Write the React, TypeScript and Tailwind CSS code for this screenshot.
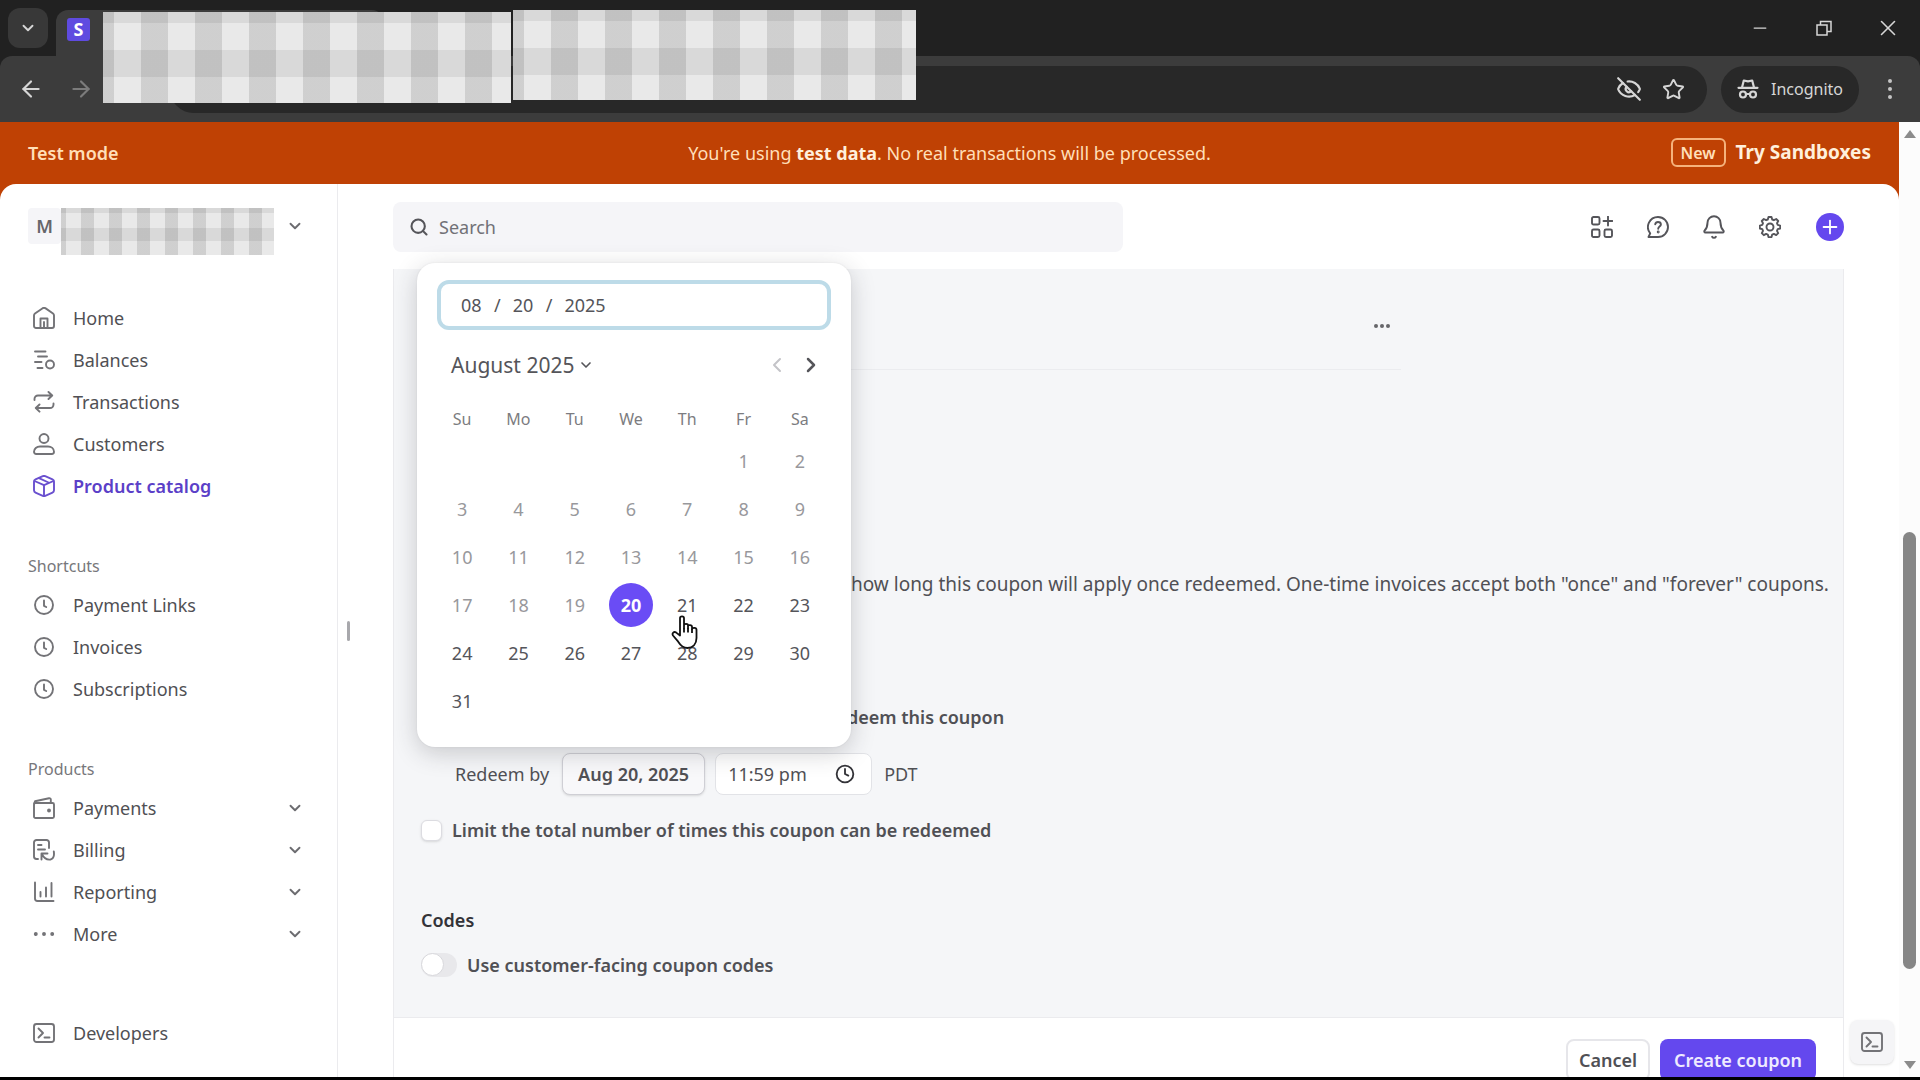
import React from 'react';
import { ChevronDown, ChevronLeft, ChevronRight, ArrowLeft, ArrowRight, Search, Bell, Minus, X, Plus, Star, EyeOff, Clock } from 'lucide-react';

interface IconProps {
    className?: string;
}

interface NavItem {
    label: string;
    icon: React.FC<IconProps>;
    active?: boolean;
    expandable?: boolean;
}

const Svg: React.FC<IconProps & { children: React.ReactNode }> = ({ className = 'w-[22px] h-[22px]', children }) => (
    <svg xmlns="http://www.w3.org/2000/svg" className={className} viewBox="0 0 22 22" fill="none" stroke="currentColor" strokeWidth="1.9" strokeLinecap="round" strokeLinejoin="round">
        {children}
    </svg>
);

const HomeIcon: React.FC<IconProps> = (props) => (
    <Svg {...props}>
        <path d="M1 8.6c0-.8.4-1.500 1-2L9.300 1.400c1-.7 2.400-.7 3.400 0L20 6.600c.6.500 1 1.200 1 2V19a2 2 0 0 1-2 2H3a2 2 0 0 1-2-2z" />
        <path d="M7.500 21v-9.500h7V21M11 15v6" />
    </Svg>
);

const BalancesIcon: React.FC<IconProps> = (props) => (
    <Svg {...props}>
        <path d="M2 2.500h10.500M5 7.500h9M2 13h6.500M4.500 19h5" />
        <circle cx="17" cy="15.500" r="4" />
    </Svg>
);

const TransactionsIcon: React.FC<IconProps> = (props) => (
    <Svg {...props}>
        <path d="M1.500 9V8a3.500 3.500 0 0 1 3.500-3.500h14M15.500 1l3.700 3.500L15.500 8" />
        <path d="M20.500 12.500v1A3.500 3.500 0 0 1 17 17H3M6.500 13.500 2.800 17l3.700 3.700" />
    </Svg>
);

const CustomersIcon: React.FC<IconProps> = (props) => (
    <Svg {...props}>
        <circle cx="11" cy="5.500" r="4.500" />
        <path d="M7 13.500h8c3.300 0 6 2.200 6 5.300 0 1.300-.9 2.200-2.200 2.200H3.200C1.900 21 1 20.100 1 18.800c0-3.100 2.700-5.300 6-5.300z" />
    </Svg>
);

const ProductIcon: React.FC<IconProps> = (props) => (
    <Svg {...props}>
        <path d="M9.800 1.200a3 3 0 0 1 2.400 0l7.300 3.200c.9.400 1.500 1.300 1.500 2.300v8.600c0 1-.6 1.900-1.500 2.300l-7.300 3.200a3 3 0 0 1-2.400 0l-7.300-3.200A2.500 2.500 0 0 1 1 15.300V6.700c0-1 .6-1.900 1.500-2.300z" />
        <path d="M1.500 6 11 10.200 20.500 6M11 10.200V21M6 3.200l9.500 4.300" />
    </Svg>
);

const ClockIcon: React.FC<IconProps> = (props) => (
    <Svg {...props}>
        <circle cx="11" cy="11" r="9" />
        <path d="M11 6.500v5.300l2.200 1.200" />
    </Svg>
);

const WalletIcon: React.FC<IconProps> = (props) => (
    <Svg {...props}>
        <rect x="1" y="6" width="20" height="15" rx="1.500" />
        <path d="M1.200 6.500 2 4.300 16 1.200c1-.2 1.800.4 1.800 1.400V6" />
        <circle cx="16" cy="13.500" r="1" fill="currentColor" />
    </Svg>
);

const BillingIcon: React.FC<IconProps> = (props) => (
    <Svg {...props}>
        <path d="M5 20H3.500A2.500 2.500 0 0 1 1 17.500v-14A2.500 2.500 0 0 1 3.500 1h10A2.500 2.500 0 0 1 16 3.500V9M5 6h3.500M5 10.500h7" />
        <path d="M8.500 20.500v-6h6M8.800 15c2 4 5.500 6 8.700 5.500 2.700-.6 4-3.500 3.300-8" />
    </Svg>
);

const ReportingIcon: React.FC<IconProps> = (props) => (
    <Svg {...props}>
        <path d="M2 1.500v16A2.500 2.500 0 0 0 4.500 20h16M7.500 11v4.500M13 6.500v9M18.500 2v13.500" />
    </Svg>
);

const MoreIcon: React.FC<IconProps> = (props) => (
    <Svg {...props}>
        <circle cx="2.800" cy="11" r="1" fill="currentColor" />
        <circle cx="11" cy="11" r="1" fill="currentColor" />
        <circle cx="19.200" cy="11" r="1" fill="currentColor" />
    </Svg>
);

const TerminalIcon: React.FC<IconProps> = (props) => (
    <Svg {...props}>
        <rect x="1" y="2" width="20" height="18" rx="2.500" />
        <path d="m5.500 6.500 4.500 4.500-4.500 4.500M11.500 15.500h5" />
    </Svg>
);

const AppsIcon: React.FC<IconProps> = (props) => (
    <Svg {...props}>
        <rect x="1" y="1" width="7.500" height="7.500" rx="1.500" />
        <rect x="1" y="13.500" width="7.500" height="7.500" rx="1.500" />
        <rect x="13.500" y="13.500" width="7.500" height="7.500" rx="1.500" />
        <path d="M17 .5v9M12.500 5h9" />
    </Svg>
);

const HelpIcon: React.FC<IconProps> = (props) => (
    <Svg {...props}>
        <path d="M11 1a10 10 0 1 1 0 20H1.500l1.700-3.700A10 10 0 0 1 11 1z" />
        <path d="M8.200 8.300A2.900 2.900 0 0 1 11 6c1.700 0 2.900 1 2.900 2.500 0 2-2.700 2.200-2.700 4.200" />
        <circle cx="11.200" cy="16" r=".5" fill="currentColor" />
    </Svg>
);

const GearIcon: React.FC<IconProps> = (props) => (
    <Svg {...props}>
        <circle cx="11" cy="11" r="3.500" />
        <path d="M9.500 1h3l.7 2.500 1.700.7L17.200 3l2 2-1.200 2.200.7 1.700 2.500.7v2.900l-2.500.7-.7 1.700 1.200 2.200-2 2-2.300-1.200-1.700.7-.7 2.500h-3l-.7-2.500-1.700-.7L4.800 19.200l-2-2L4 14.900l-.7-1.700-2.500-.7V9.600l2.500-.7L4 7.200 2.800 5l2-2 2.300 1.200 1.700-.7z" />
    </Svg>
);

const IncognitoIcon: React.FC<IconProps> = (props) => (
    <Svg {...props}>
        <path d="M1.500 9.800h19M5 9.500l1.800-7 4.200.8 4.200-.8 1.800 7" strokeWidth="2.200" />
        <circle cx="6" cy="16.500" r="3" strokeWidth="2.200" />
        <circle cx="16" cy="16.500" r="3" strokeWidth="2.200" />
        <path d="M9 16h4" strokeWidth="2.200" />
    </Svg>
);

const mainNav: NavItem[] = [
    { label: 'Home', icon: HomeIcon },
    { label: 'Balances', icon: BalancesIcon },
    { label: 'Transactions', icon: TransactionsIcon },
    { label: 'Customers', icon: CustomersIcon },
    { label: 'Product catalog', icon: ProductIcon, active: true },
];

const shortcuts: NavItem[] = [
    { label: 'Payment Links', icon: ClockIcon },
    { label: 'Invoices', icon: ClockIcon },
    { label: 'Subscriptions', icon: ClockIcon },
];

const products: NavItem[] = [
    { label: 'Payments', icon: WalletIcon, expandable: true },
    { label: 'Billing', icon: BillingIcon, expandable: true },
    { label: 'Reporting', icon: ReportingIcon, expandable: true },
    { label: 'More', icon: MoreIcon, expandable: true },
];

const weekdays = ['Su', 'Mo', 'Tu', 'We', 'Th', 'Fr', 'Sa'];

// August 2025 starts on a Friday
const weeks = [0, 1, 2, 3, 4, 5].map((week) => weekdays.map((_, day) => week * 7 + day - 4));

const largeCheck = 'bg-[#e9e9e9] bg-[repeating-linear-gradient(90deg,#0000001c_0_11px,transparent_11px_38px,#0000001c_38px_54px),repeating-linear-gradient(180deg,#00000012_0_11px,transparent_11px_38px,#00000012_38px_54px)]';
const smallCheck = 'bg-[#e9e9e9] bg-[repeating-linear-gradient(90deg,#0000001c_0_5px,transparent_5px_20px,#0000001c_20px_28px),repeating-linear-gradient(180deg,#00000012_0_5px,transparent_5px_20px,#00000012_20px_28px)]';

const BrowserChrome: React.FC = () => (
    <header className="relative shrink-0 h-[122px] bg-[#212121] text-[#d6d6d6]">
        <div className="flex h-14 items-center pl-2">
            <button className="flex items-center justify-center w-10 h-10 rounded-xl bg-[#383838]" aria-label="Search tabs">
                <ChevronDown className="w-[18px] h-[18px]" strokeWidth={2.5} />
            </button>
            <div className="flex items-center self-end w-[328px] h-[46px] ml-2 pl-[11px] rounded-t-xl bg-[#3c3c3c]">
                <span className="flex items-center justify-center w-[23px] h-[23px] rounded-[3px] mb-2 bg-[#5f4be0] text-white text-lg font-bold leading-none">S</span>
            </div>
            <div className="flex ml-auto">
                <button className="flex items-center justify-center w-16 h-14" aria-label="Minimize">
                    <Minus className="w-5 h-5" strokeWidth={1.500} />
                </button>
                <button className="flex items-center justify-center w-16 h-14" aria-label="Restore">
                    <svg className="w-4 h-4" viewBox="0 0 16 16" fill="none" stroke="currentColor" strokeWidth="1.500">
                        <path d="M1 5h10v10H1zM4.500 5V1.500H15v10h-4" />
                    </svg>
                </button>
                <button className="flex items-center justify-center w-16 h-14" aria-label="Close">
                    <X className="w-[26px] h-[26px]" strokeWidth={1.500} />
                </button>
            </div>
        </div>
        <div className="flex items-center h-[66px] pl-[18px] pr-5 rounded-t-xl bg-[#3c3c3c]">
            <button aria-label="Back"><ArrowLeft className="w-[26px] h-[26px]" /></button>
            <button className="ml-6 text-[#7c7c7c]" aria-label="Forward"><ArrowRight className="w-[26px] h-[26px]" /></button>
            <div className="flex flex-1 items-center justify-end gap-5 h-[47px] ml-[76px] pr-[22px] rounded-full bg-[#282828]">
                <button aria-label="Tracking protection"><EyeOff className="w-[26px] h-[26px]" /></button>
                <button aria-label="Bookmark"><Star className="w-[23px] h-[23px]" /></button>
            </div>
            <button className="flex items-center gap-3 h-[47px] ml-[14px] px-4 rounded-full bg-[#282828] text-base">
                <IncognitoIcon />
                Incognito
            </button>
            <button className="flex flex-col items-center gap-1 w-5 ml-[21px]" aria-label="Browser menu">
                <span className="w-1 h-1 rounded-full bg-[#c4c4c4]" />
                <span className="w-1 h-1 rounded-full bg-[#c4c4c4]" />
                <span className="w-1 h-1 rounded-full bg-[#c4c4c4]" />
            </button>
        </div>
        {/* redacted tab titles and address */}
        <div className={`absolute left-[103px] top-3 w-[408px] h-[91px] ${largeCheck}`} />
        <div className={`absolute left-[513px] top-[10px] w-[403px] h-[90px] ${largeCheck}`} />
    </header>
);

const TestBanner: React.FC = () => (
    <div className="grid grid-cols-[1fr_auto_1fr] items-center shrink-0 h-[62px] px-7 text-lg text-[#ffdfb8]">
        <span className="font-semibold">Test mode</span>
        <p>You're using <b className="text-[#fff0dc]">test data</b>. No real transactions will be processed.</p>
        <a href="#sandboxes" className="flex items-center justify-end gap-[10px] text-[19px] font-bold text-[#fff0dc]">
            <span className="flex items-center justify-center w-[55px] h-[29px] rounded-md border-2 border-[#f5b27c] text-base font-semibold text-[#ffdfb8]">New</span>
            Try Sandboxes
        </a>
    </div>
);

const NavLink: React.FC<{ item: NavItem }> = ({ item }) => (
    <li>
        <a href="#nav" className={`flex items-center gap-[18px] h-[42px] pl-[5px] text-lg ${item.active ? 'font-semibold text-[#5b3fc8]' : 'text-[#505054]'}`}>
            <span className={item.active ? 'text-[#6a50cf]' : 'text-[#737377]'}>
                <item.icon />
            </span>
            <span className="flex-1">{item.label}</span>
            {item.expandable && <ChevronDown className="w-[18px] h-[18px] text-[#6c6c70]" strokeWidth={2.500} />}
        </a>
    </li>
);

const Sidebar: React.FC = () => (
    <nav className="shrink-0 w-[338px] pl-7 pr-[33px] pt-6 border-r border-[#ebebee]">
        <div className="flex items-start h-12">
            <span className="flex items-center justify-center w-[33px] h-9 rounded bg-[#f5f5f8] text-lg font-semibold text-[#66666a]">M</span>
            <span className={`w-[213px] h-[47px] ${smallCheck}`} />
            <button className="flex items-center h-9 ml-auto" aria-label="Switch account">
                <ChevronDown className="w-[18px] h-[18px] text-[#6c6c70]" strokeWidth={2.500} />
            </button>
        </div>
        <ul className="mt-[41px]">
            {mainNav.map((item) => <NavLink key={item.label} item={item} />)}
        </ul>
        <h2 className="flex items-center h-9 mt-[41px] text-base text-[#77777b]">Shortcuts</h2>
        <ul>
            {shortcuts.map((item) => <NavLink key={item.label} item={item} />)}
        </ul>
        <h2 className="flex items-center h-9 mt-[41px] text-base text-[#77777b]">Products</h2>
        <ul>
            {products.map((item) => <NavLink key={item.label} item={item} />)}
        </ul>
        <ul className="mt-[57px]">
            <NavLink item={{ label: 'Developers', icon: TerminalIcon }} />
        </ul>
    </nav>
);

const TopBar: React.FC = () => (
    <div className="flex items-center justify-between h-[85px] text-[#55555a]">
        <label className="flex items-center gap-[10px] w-[730px] h-[50px] pl-4 rounded-lg bg-[#f5f5f8]">
            <Search className="w-5 h-5" strokeWidth={2.500} />
            <input type="text" placeholder="Search" aria-label="Search" className="flex-1 bg-transparent text-lg outline-none placeholder:text-[#717177]" />
        </label>
        <div className="flex items-center gap-8">
            <div className="flex items-center gap-7">
                <button className="flex items-center justify-center w-7 h-7" aria-label="Apps"><AppsIcon /></button>
                <button className="flex items-center justify-center w-7 h-7" aria-label="Help"><HelpIcon /></button>
                <button className="flex items-center justify-center w-7 h-7" aria-label="Notifications"><Bell className="w-[26px] h-[26px]" strokeWidth={1.800} /></button>
                <button className="flex items-center justify-center w-7 h-7" aria-label="Settings"><GearIcon /></button>
            </div>
            <button className="flex items-center justify-center w-7 h-7 rounded-full bg-[#6448ee] text-white" aria-label="Create"><Plus className="w-[22px] h-[22px]" strokeWidth={2} /></button>
        </div>
    </div>
);

const dayClass = (day: number) => {
    if (day === 20) return 'bg-[#6a4cf5] text-white font-bold';
    return day < 20 ? 'text-[#98989c]' : 'text-[#55555a]';
};

const DatePicker: React.FC = () => (
    <div className="absolute left-[23px] -top-[6px] w-[434px] pt-[17px] pb-[22px] rounded-[18px] bg-white text-[#55555a] shadow-[0_6px_24px_rgba(40,40,50,0.22),0_0_2px_rgba(40,40,50,0.1)]">
        <div className="flex items-center gap-3 h-[50px] mx-5 pl-5 rounded-xl border-4 border-[#bddbe8] text-lg">
            <input type="text" defaultValue="08" aria-label="Month" className="w-[21px] bg-transparent outline-none" />
            <span>/</span>
            <input type="text" defaultValue="20" aria-label="Day" className="w-[21px] bg-transparent outline-none" />
            <span>/</span>
            <input type="text" defaultValue="2025" aria-label="Year" className="w-12 bg-transparent outline-none" />
        </div>
        <div className="flex items-center h-10 mt-[15px] pl-[34px] pr-7">
            <button className="flex items-center gap-1 text-[21px]">
                August 2025
                <ChevronDown className="w-4 h-4" strokeWidth={2.500} />
            </button>
            <button className="ml-auto text-[#c4c4c8]" aria-label="Previous month" disabled><ChevronLeft className="w-6 h-6" /></button>
            <button className="ml-[10px]" aria-label="Next month"><ChevronRight className="w-6 h-6" strokeWidth={2.500} /></button>
        </div>
        <table className="table-fixed w-[394px] mt-4 ml-[17px] text-center">
            <thead>
                <tr className="h-9 text-base text-[#7c7c80]">
                    {weekdays.map((day) => <th key={day} scope="col" className="p-0 font-normal">{day}</th>)}
                </tr>
            </thead>
            <tbody>
                {weeks.map((week, index) => (
                    <tr key={index} className="h-12 text-lg">
                        {week.map((day) => (
                            <td key={day} className="p-0">
                                {day > 0 && day < 32 && (
                                    <button className={`align-middle w-11 h-11 rounded-full ${dayClass(day)}`}>{day}</button>
                                )}
                            </td>
                        ))}
                    </tr>
                ))}
            </tbody>
        </table>
        {/* pointer over the 21st */}
        <svg className="absolute left-[254px] top-[352px] w-[27px] h-[35px]" viewBox="0 0 27 35" fill="white" stroke="#111" strokeWidth="1.800" strokeLinejoin="round">
            <path d="M9 20.500V3.200C9 .8 13 .8 13 3.200V13v-2.700c0-2 4-2 4 0V13v-1.700c0-1.800 4-1.700 4 .4v2.500c.3-1.900 4.500-1.700 4.500.6v8.200c0 6-3.500 10-9 10-4.800 0-7-2.600-9.300-6.300L2 20.500c-1.400-2.300 1-4.500 3.200-2.900z" />
            <path d="M13 13v4.500M17 13v4.500M21 14v4" fill="none" />
        </svg>
    </div>
);

const CouponForm: React.FC = () => (
    <section className="relative border-x border-[#ebebee] text-lg text-[#505055]">
        <div className="bg-[#f5f6f8] px-[27px] pt-[13px] pb-[38px]">
            <div className="flex items-center justify-end max-w-[980px] h-[88px] pr-[11px] border-b border-[#ebecef]">
                <button className="flex gap-[2px]" aria-label="More options">
                    <span className="w-1 h-1 rounded-full bg-[#66666a]" />
                    <span className="w-1 h-1 rounded-full bg-[#66666a]" />
                    <span className="w-1 h-1 rounded-full bg-[#66666a]" />
                </button>
            </div>
            <p className="mt-[200px] pl-[430px] leading-7 text-[19px] whitespace-nowrap">how long this coupon will apply once redeemed. One-time invoices accept both "once" and "forever" coupons.</p>
            <p className="mt-[105px] pl-[408px] leading-7 font-semibold">redeem this coupon</p>
            <div className="flex items-center h-[42px] mt-[22px] pl-[34px]">
                <label htmlFor="redeem-date">Redeem by</label>
                <button id="redeem-date" className="h-[42px] ml-[13px] w-[143px] rounded-lg border border-[#cfcfd5] bg-[#f8f8fa] font-semibold whitespace-nowrap shadow-sm">Aug 20, 2025</button>
                <div className="flex items-center w-[157px] h-[42px] ml-[10px] pl-3 pr-4 rounded-lg border border-[#e2e3e7] bg-white">
                    <input type="text" defaultValue="11:59 pm" aria-label="Redeem time" className="w-[90px] bg-transparent outline-none" />
                    <Clock className="w-5 h-5 ml-auto text-[#333338]" strokeWidth={2.200} />
                </div>
                <span className="ml-3">PDT</span>
            </div>
            <label className="flex items-center gap-[10px] mt-[21px] leading-7 font-semibold">
                <input type="checkbox" className="appearance-none w-[21px] h-[21px] rounded-md border border-[#dcdce1] bg-white shadow-sm" />
                Limit the total number of times this coupon can be redeemed
            </label>
            <h2 className="mt-[62px] leading-7 font-semibold text-[#333338]">Codes</h2>
            <label className="flex items-center gap-[10px] mt-[17px] leading-7 font-semibold">
                <input type="checkbox" role="switch" className="appearance-none w-9 h-6 rounded-full bg-[#e8e8eb] before:block before:w-[23px] before:h-[23px] before:rounded-full before:border before:border-[#d8d8dc] before:bg-white" />
                Use customer-facing coupon codes
            </label>
        </div>
        <div className="flex justify-end gap-[10px] h-[90px] pt-[21px] pr-[27px] border-t border-[#ebebee] bg-white font-semibold">
            <button className="w-[84px] h-[42px] rounded-lg border-2 border-[#e6e6ea]">Cancel</button>
            <button className="w-[156px] h-[42px] rounded-lg bg-[#6448ee] text-[#eeeaff] whitespace-nowrap">Create coupon</button>
        </div>
        <DatePicker />
    </section>
);

const ScrollBar: React.FC = () => (
    <div className="flex flex-col items-center justify-between shrink-0 w-[21px] py-2 bg-[#fcfcfc]" aria-hidden="true">
        <svg className="w-3 h-2" viewBox="0 0 12 8" fill="#8b8b8b"><path d="M0 8 6 0l6 8z" /></svg>
        <span className="w-[13px] h-[437px] mt-[302px] rounded-full bg-[#868686]" />
        <svg className="w-3 h-2" viewBox="0 0 12 8" fill="#8b8b8b"><path d="M0 0l6 8 6-8z" /></svg>
    </div>
);

const App: React.FC = () => (
    <div className="flex flex-col h-screen overflow-hidden border-b-[3px] border-black font-['Noto_Sans','Open_Sans',sans-serif]">
        <BrowserChrome />
        <div className="flex flex-1 min-h-0">
            <div className="flex flex-col flex-1 min-w-0 bg-[#bf4104]">
                <TestBanner />
                <div className="relative flex flex-1 min-h-0 overflow-hidden rounded-t-2xl bg-white">
                    <Sidebar />
                    <div className="self-start shrink-0 w-[3px] h-5 ml-[9px] mt-[437px] rounded bg-[#a8a8ac]" />
                    <main className="flex-1 min-w-0 pl-[43px] pr-[55px]">
                        <TopBar />
                        <CouponForm />
                    </main>
                    <button className="absolute right-[5px] bottom-[13px] flex items-center justify-center w-11 h-11 rounded-lg bg-[#f5f5f7] text-[#737377] shadow-sm" aria-label="Open workbench">
                        <TerminalIcon />
                    </button>
                </div>
            </div>
            <ScrollBar />
        </div>
    </div>
);

export default App;
